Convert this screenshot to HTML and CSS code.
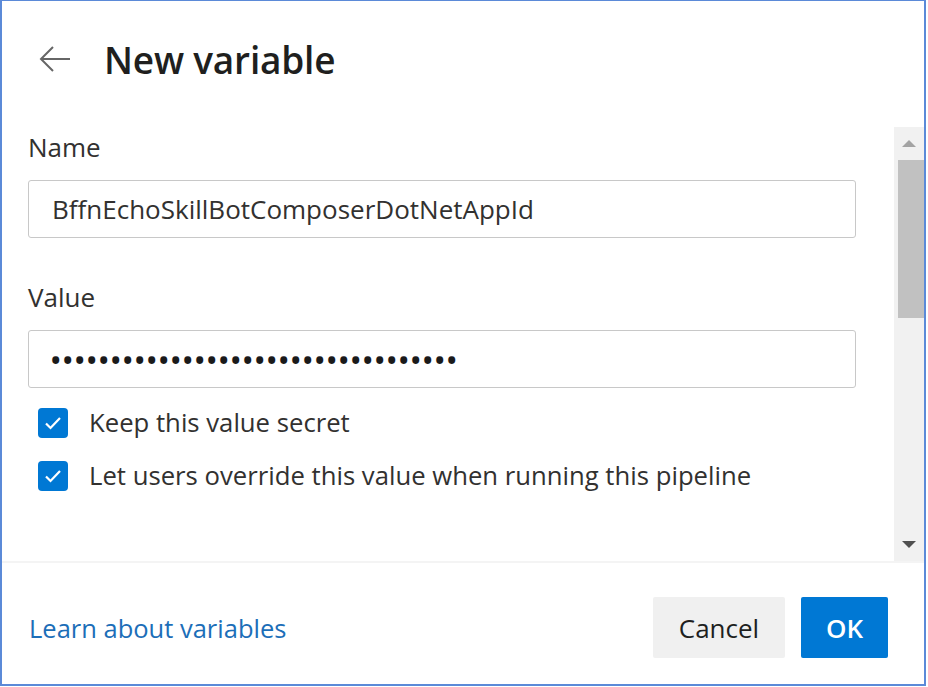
FILE: index.html
```html
<!DOCTYPE html>
<html>
<head>
<meta charset="utf-8">
<link rel="stylesheet" href="styles.css">
</head>
<body>
<div class="frame">
  <div class="header">
    <svg class="back" width="34" height="30" viewBox="0 0 34 30"><path d="M32 15H3M15 3L3 15l12 12" fill="none" stroke="#666" stroke-width="2"/></svg>
    <h1 class="title">New variable</h1>
  </div>
  <div class="scroll">
    <div class="content">
      <label class="label">Name</label>
      <div class="input">BffnEchoSkillBotComposerDotNetAppId</div>
      <label class="label label-value">Value</label>
      <div class="input dots">••••••••••••••••••••••••••••••••••</div>
      <div class="check-row">
        <span class="box"><svg width="18" height="14" viewBox="0 0 18 14"><path d="M2 7.5l4.5 4.5L16 2" fill="none" stroke="#fff" stroke-width="2.2"/></svg></span>
        <span class="check-text">Keep this value secret</span>
      </div>
      <div class="check-row">
        <span class="box"><svg width="18" height="14" viewBox="0 0 18 14"><path d="M2 7.5l4.5 4.5L16 2" fill="none" stroke="#fff" stroke-width="2.2"/></svg></span>
        <span class="check-text">Let users override this value when running this pipeline</span>
      </div>
    </div>
    <div class="scrollbar">
      <div class="arrow-btn"><span class="tri-up"></span></div>
      <div class="thumb"></div>
      <div class="track"></div>
      <div class="arrow-btn"><span class="tri-down"></span></div>
    </div>
  </div>
  <div class="footer">
    <a class="link">Learn about variables</a>
    <div class="buttons">
      <button class="btn cancel">Cancel</button>
      <button class="btn ok">OK</button>
    </div>
  </div>
</div>
</body>
</html>
```
FILE: styles.css
```css
* { box-sizing: border-box; }
html, body { margin: 0; padding: 0; background: #fff; }
body { font-family: "Open Sans", "Noto Sans", sans-serif; color: #323130; }
.frame {
  width: 926px;
  height: 686px;
  border-style: solid;
  border-color: #5b8ad8;
  border-width: 1px 2px 2px 2px;
  display: flex;
  flex-direction: column;
  background: #fff;
}
.header {
  height: 126px;
  display: flex;
  align-items: center;
  padding-left: 36px;
  padding-bottom: 10px;
}
.back { display: block; margin-right: 32px; }
.title {
  margin: 0;
  font-size: 37px;
  font-weight: 600;
  color: #201f1e;
  letter-spacing: -0.2px;
}
.scroll {
  height: 436px;
  display: flex;
  border-bottom: 2px solid #f4f4f4;
}
.content {
  flex: 1;
  padding: 2px 38px 0 26px;
}
.label {
  display: block;
  font-size: 26px;
  line-height: 36px;
  color: #323130;
  margin-bottom: 15px;
}
.label-value { margin-top: 41px; }
.input {
  height: 58px;
  border: 1px solid #c8c8c8;
  border-radius: 3px;
  padding-left: 23px;
  font-size: 26px;
  line-height: 56px;
  color: #323130;
}
.dots { font-size: 25px; font-weight: 700; letter-spacing: 2.6px; padding-left: 22px; color: #1a1a1a; }
.check-row {
  display: flex;
  align-items: center;
  margin-left: 10px;
  height: 31px;
  margin-top: 19px;
}
.check-row + .check-row { margin-top: 22px; }
.box {
  width: 30px;
  height: 30px;
  border-radius: 4px;
  background: #0078d4;
  display: flex;
  align-items: center;
  justify-content: center;
  margin-right: 21px;
}
.box svg { display: block; }
.check-text { font-size: 25.7px; color: #323130; }
.scrollbar {
  width: 30px;
  background: #f1f1f1;
  display: flex;
  flex-direction: column;
}
.arrow-btn {
  height: 33px;
  display: flex;
  align-items: center;
  justify-content: center;
}
.tri-up {
  width: 0; height: 0;
  border-left: 7px solid transparent;
  border-right: 7px solid transparent;
  border-bottom: 7px solid #a3a3a3;
}
.tri-down {
  width: 0; height: 0;
  border-left: 7px solid transparent;
  border-right: 7px solid transparent;
  border-top: 7px solid #505050;
}
.thumb {
  height: 158px;
  margin-left: 4px;
  background: #c1c1c1;
}
.track { flex: 1; }
.footer {
  flex: 1;
  display: flex;
  align-items: center;
  justify-content: space-between;
  padding: 0 36px 0 27px;
  padding-top: 8px;
}
.link {
  font-size: 25.5px;
  color: #1c6eb8;
  cursor: pointer;
}
.buttons { display: flex; gap: 16px; }
.btn {
  height: 61px;
  border: none;
  border-radius: 2px;
  font-family: inherit;
  font-size: 26px;
  font-weight: 600;
}
.cancel { width: 132px; background: #f0f0f0; color: #201f1e; font-weight: 500; }
.ok { width: 87px; background: #0078d4; color: #fff; }
```
